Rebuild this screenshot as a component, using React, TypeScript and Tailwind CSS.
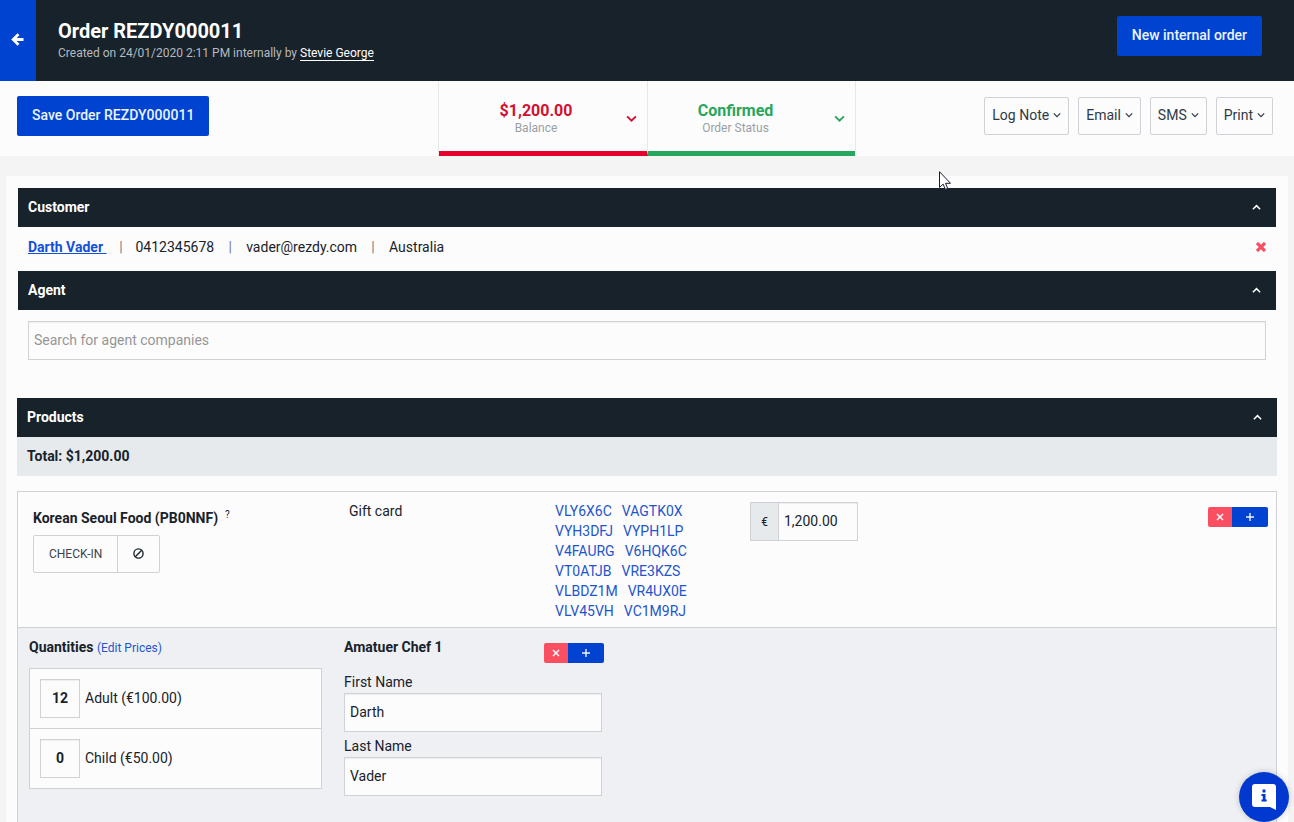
import { useId, type ReactNode } from "react";

function Chevron({ up = false, className }: { up?: boolean; className: string }) {
  return (
    <svg viewBox="0 0 10 10" fill="none" stroke="currentColor" aria-hidden="true" className={className}>
      <path d={up ? "M1 7 5 3l4 4" : "M1 3l4 4 4-4"} />
    </svg>
  );
}

function PrimaryButton({ children }: { children: ReactNode }) {
  return (
    <button type="button" className="h-10 rounded-xs bg-[#0043d0] px-[15px] pb-0.5 text-sm font-medium text-[#eaf4ff]">
      {children}
    </button>
  );
}

function MenuButton({ children }: { children: ReactNode }) {
  return (
    <button
      type="button"
      className="flex h-[38px] items-center gap-1 rounded-xs border border-[#cfd2d6] px-[7px] pb-0.5 text-sm text-[#2f3a44]"
    >
      {children}
      <Chevron className="size-2 stroke-[1.5]" />
    </button>
  );
}

function StatusTab({ value, label, tone, box }: { value: string; label: string; tone: string; box: string }) {
  return (
    <button type="button" className={`relative flex flex-col items-center border-b-[5px] pt-5 ${box} ${tone}`}>
      <span className="text-base leading-[19px] font-bold">{value}</span>
      <span className="text-xs leading-4 text-[#9a9fa5]">{label}</span>
      <Chevron className="absolute top-8 right-2.5 size-[11px] stroke-[1.7]" />
    </button>
  );
}

function SectionBar({ title }: { title: string }) {
  return (
    <div className="flex h-[39px] items-center justify-between bg-[#18222a] pr-[15px] pb-px pl-2.5 text-white">
      <h2 className="text-sm font-bold">{title}</h2>
      <button type="button" aria-label={`Collapse ${title}`} className="pt-px">
        <Chevron up className="size-[9px] stroke-[1.7]" />
      </button>
    </div>
  );
}

function RemoveAdd() {
  return (
    <div className="flex h-5 overflow-hidden rounded-xs text-[#f2f4f8]">
      <button type="button" aria-label="Remove" className="flex w-6 items-center justify-center bg-[#f94f60]">
        <svg viewBox="0 0 8 8" stroke="currentColor" strokeWidth="1.6" className="size-2">
          <path d="M1 1l6 6M7 1 1 7" />
        </svg>
      </button>
      <button type="button" aria-label="Add" className="flex w-9 items-center justify-center bg-[#0043d0]">
        <svg viewBox="0 0 8 8" stroke="currentColor" strokeWidth="1.4" className="size-2">
          <path d="M4 0v8M0 4h8" />
        </svg>
      </button>
    </div>
  );
}

const inputStyle =
  "h-[39px] border border-[#cfd3d8] bg-[#fcfcfc] pb-px text-sm shadow-[inset_0_1px_1px_rgba(0,0,0,0.06)] outline-none";

function NameField({ label, value }: { label: string; value: string }) {
  const id = useId();
  return (
    <div className="flex flex-col">
      <label htmlFor={id} className="h-[25px] pt-1 text-sm">
        {label}
      </label>
      <input id={id} defaultValue={value} className={`${inputStyle} w-full px-[5px]`} />
    </div>
  );
}

function Quantity({ count, label }: { count: string; label: string }) {
  const id = useId();
  return (
    <div className="flex h-[60px] items-center gap-[5px] border-b border-[#cfd3d8] px-2.5">
      <input id={id} defaultValue={count} className={`${inputStyle} w-10 text-center font-bold`} />
      <label htmlFor={id} className="pb-0.5 text-sm">
        {label}
      </label>
    </div>
  );
}

const codes = [
  ["VLY6X6C", "VAGTK0X"],
  ["VYH3DFJ", "VYPH1LP"],
  ["V4FAURG", "V6HQK6C"],
  ["VT0ATJB", "VRE3KZS"],
  ["VLBDZ1M", "VR4UX0E"],
  ["VLV45VH", "VC1M9RJ"],
];

export default function App() {
  return (
    <div className="relative flex min-h-screen flex-col bg-[#f4f4f4] font-['Roboto',sans-serif] text-sm text-[#18222a]">
      <header className="flex h-[81px] bg-[#18222a]">
        <button
          type="button"
          aria-label="Back"
          className="flex w-9 items-center justify-center bg-[#0043d0] pr-px pb-0.5 text-white"
        >
          <svg viewBox="0 0 13 13" fill="none" stroke="currentColor" strokeWidth="2.8" className="size-[13px]">
            <path d="M7.500 1.200 2.200 6.500l5.300 5.300M2.500 6.500H12.500" />
          </svg>
        </button>
        <div className="flex-1 pt-[19px] pl-[22px]">
          <h1 className="text-xl leading-6 font-bold text-white">Order REZDY000011</h1>
          <p className="text-xs leading-5 text-[#b4bac0]">
            Created on 24/01/2020 2:11 PM internally by{" "}
            <a href="#user" className="border-b border-white text-white">
              Stevie George
            </a>
          </p>
        </div>
        <div className="pt-4 pr-8">
          <PrimaryButton>New internal order</PrimaryButton>
        </div>
      </header>

      <div className="grid h-[75px] grid-cols-[1fr_auto_1fr] bg-[#fcfcfc]">
        <div className="pt-[15px] pl-[17px]">
          <PrimaryButton>Save Order REZDY000011</PrimaryButton>
        </div>
        <div className="flex divide-x divide-[#e6e8ea] border-x border-[#e6e8ea]">
          <StatusTab
            value="$1,200.00"
            label="Balance"
            tone="border-b-[#e4002b] text-[#d30f2f]"
            box="w-[209px] pr-3.5"
          />
          <StatusTab
            value="Confirmed"
            label="Order Status"
            tone="border-b-[#27a65e] text-[#27a65e]"
            box="w-[207px] pr-8"
          />
        </div>
        <div className="flex justify-end gap-[9px] pt-4 pr-[21px]">
          <MenuButton>Log Note</MenuButton>
          <MenuButton>Email</MenuButton>
          <MenuButton>SMS</MenuButton>
          <MenuButton>Print</MenuButton>
        </div>
      </div>

      <main className="mx-1.5 mt-5 flex flex-1 flex-col bg-[#fcfcfc] px-[11px] pt-3">
        <div className="px-px">
          <section>
            <SectionBar title="Customer" />
            <div className="flex h-11 items-center justify-between pr-2.5 pb-1 pl-2.5">
              <div className="flex items-center">
                <a href="#customer" className="font-bold whitespace-pre text-[#1450d8] underline">
                  {"Darth Vader "}
                </a>
                <span className="w-[29px] text-center text-[#777f87]">|</span>
                <span>0412345678</span>
                <span className="w-8 text-center text-[#777f87]">|</span>
                <span>vader@rezdy.com</span>
                <span className="w-8 text-center text-[#777f87]">|</span>
                <span>Australia</span>
              </div>
              <button type="button" aria-label="Remove customer" className="text-[#f94f60]">
                <svg viewBox="0 0 10 10" stroke="currentColor" strokeWidth="3.2" className="size-2.5">
                  <path d="M1 1l8 8M9 1 1 9" />
                </svg>
              </button>
            </div>
          </section>
          <section>
            <SectionBar title="Agent" />
            <div className="px-2.5 pt-[11px] pb-[38px]">
              <input
                aria-label="Search for agent companies"
                placeholder="Search for agent companies"
                className={`${inputStyle} block w-full px-[5px] placeholder:text-[#969696]`}
              />
            </div>
          </section>
        </div>

        <section className="flex flex-1 flex-col">
          <SectionBar title="Products" />
          <div className="flex h-[39px] items-center bg-[#e6eaed] px-2.5 pb-px font-bold">Total: $1,200.00</div>

          <div className="mt-[15px] flex flex-1 flex-col border border-b-0 border-[#cfd3d8]">
            <div className="grid grid-cols-[316fr_206fr_195fr_518fr] pt-[9px] pr-2 pb-1.5 pl-[15px]">
              <div className="pt-[7px]">
                <h3 className="flex gap-[7px] font-bold">
                  Korean Seoul Food (PB0NNF)
                  <sup className="top-0 pt-0.5 text-[10px] leading-none font-normal">?</sup>
                </h3>
                <div className="mt-[7px] inline-flex h-[38px] divide-x divide-[#cfd3d8] rounded-xs border border-[#cfd3d8] text-[#3a444d]">
                  <button type="button" className="px-[15px] text-xs">
                    CHECK-IN
                  </button>
                  <button type="button" aria-label="No show" className="px-[15px] pb-px text-[#18222a]">
                    <svg viewBox="0 0 12 12" fill="none" stroke="currentColor" strokeWidth="1.5" className="size-[11px]">
                      <circle cx="6" cy="6" r="5" />
                      <path d="M2.500 9.500l7-7" />
                    </svg>
                  </button>
                </div>
              </div>
              <div>Gift card</div>
              <ul>
                {codes.map(([first, second]) => (
                  <li key={first} className="flex gap-2.5 text-[#1f55cc]">
                    <a href={`#${first}`}>{first}</a>
                    <a href={`#${second}`}>{second}</a>
                  </li>
                ))}
              </ul>
              <div className="flex items-start justify-between pt-px">
                <label className="flex">
                  <span className="flex h-[39px] w-7 items-center justify-center border border-r-0 border-[#cfd3d8] bg-[#e6eaed] text-xs">
                    €
                  </span>
                  <input aria-label="Price" defaultValue="1,200.00" className={`${inputStyle} w-20 px-[5px]`} />
                </label>
                <div className="pt-[5px]">
                  <RemoveAdd />
                </div>
              </div>
            </div>

            <div className="flex flex-1 gap-[22px] border-t border-[#cfd3d8] bg-[#eef0f4] px-[11px] pt-[9px] pb-[26px]">
              <div className="w-[293px]">
                <h3 className="font-bold">
                  Quantities{" "}
                  <a href="#prices" className="text-xs font-normal text-[#1f55cc]">
                    (Edit Prices)
                  </a>
                </h3>
                <div className="mt-[11px] border border-b-0 border-[#cfd3d8] bg-[#fcfcfc]">
                  <Quantity count="12" label="Adult (€100.00)" />
                  <Quantity count="0" label="Child (€50.00)" />
                </div>
              </div>
              <div className="w-[260px]">
                <div className="flex h-[31px] items-start justify-between">
                  <h3 className="font-bold">Amatuer Chef 1</h3>
                  <div className="pt-1.5">
                    <RemoveAdd />
                  </div>
                </div>
                <div className="pr-0.5">
                  <NameField label="First Name" value="Darth" />
                  <NameField label="Last Name" value="Vader" />
                </div>
              </div>
            </div>
          </div>
        </section>
      </main>

      <button
        type="button"
        aria-label="Help"
        className="fixed right-[5px] bottom-0 flex size-[50px] items-center justify-center rounded-full bg-[#0038d0] shadow-[0_0_6px_rgba(0,0,0,0.2)]"
      >
        <svg viewBox="0 0 26 28" className="h-7 w-[26px]">
          <path d="M4 1h18a3 3 0 0 1 3 3v23l-6-3H4a3 3 0 0 1-3-3V4a3 3 0 0 1 3-3z" fill="#fff" />
          <path d="M11.500 6.500h3v3h-3zM10.500 11h4v5.500h1.200v2h-5.200v-2h1.300v-3.500h-1.300z" fill="#0038d0" />
        </svg>
      </button>

      <svg viewBox="0 0 12 19" aria-hidden="true" className="absolute top-[171px] left-[939px] h-[19px] w-3">
        <path
          d="M.5.700v15.800l3.600-3.400 2.300 5.300 2.300-1-2.200-5.100h5z"
          fill="#fff"
          stroke="#1a1a2a"
          strokeWidth="1"
        />
      </svg>
    </div>
  );
}
